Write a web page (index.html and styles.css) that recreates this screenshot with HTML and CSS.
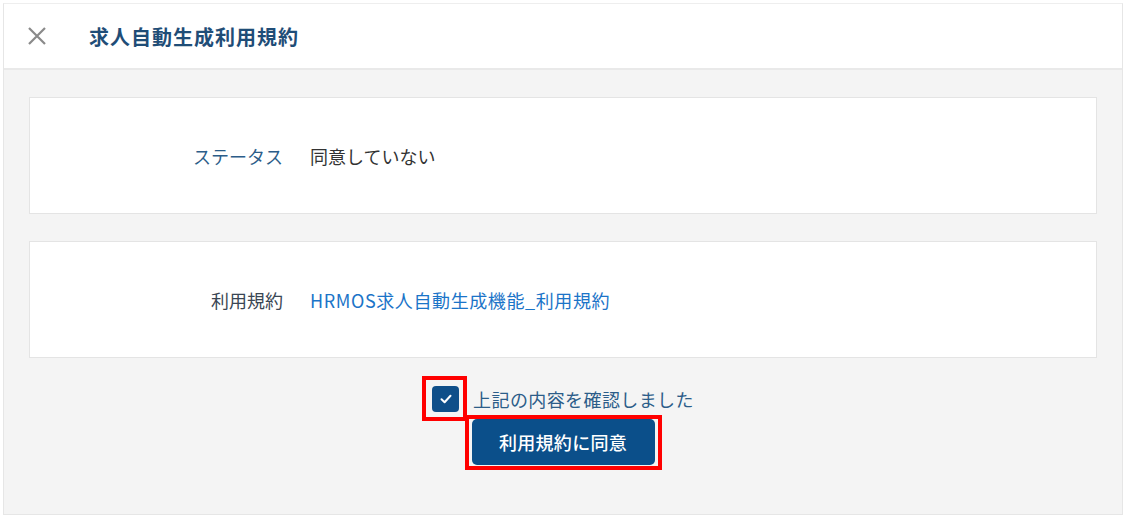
FILE: index.html
```html
<!DOCTYPE html>
<html lang="ja">
<head>
<meta charset="utf-8">
<title>求人自動生成利用規約</title>
<link rel="stylesheet" href="styles.css">
</head>
<body>
<div class="frame">
  <header class="header">
    <button class="close" aria-label="閉じる">
      <svg width="20" height="20" viewBox="0 0 20 20"><path d="M2 2 L18 18 M18 2 L2 18" stroke="#8a8a8a" stroke-width="2.2" stroke-linecap="butt"/></svg>
    </button>
    <h1 class="title">求人自動生成利用規約</h1>
  </header>
  <main class="content">
    <section class="card">
      <div class="label label-blue">ステータス</div>
      <div class="value">同意していない</div>
    </section>
    <section class="card">
      <div class="label label-dark">利用規約</div>
      <a class="value link" href="#">HRMOS求人自動生成機能_利用規約</a>
    </section>
    <div class="agree">
      <label class="check-row">
        <span class="checkbox">
          <svg width="14" height="14" viewBox="0 0 14 14"><path d="M2.5 7.3 L5.6 10.2 L11.5 3.8" fill="none" stroke="#fff" stroke-width="2" stroke-linecap="round" stroke-linejoin="round"/></svg>
          <span class="mark mark-check"></span>
        </span>
        <span class="check-text">上記の内容を確認しました</span>
      </label>
      <button class="submit">利用規約に同意<span class="mark mark-btn"></span></button>
    </div>
  </main>
</div>
</body>
</html>
```

FILE: styles.css
```css
* { box-sizing: border-box; }
html, body { margin: 0; padding: 0; background: #fff; }
body {
  font-family: "Noto Sans CJK JP", "Noto Sans", sans-serif;
  width: 1126px;
  height: 517px;
  overflow: hidden;
}
.frame {
  margin: 3px 0 0 3px;
  width: 1120px;
  height: 512px;
  border: 1px solid #e6e6e6;
  border-top-color: #eeeeee;
  background: #f4f4f4;
  display: flex;
  flex-direction: column;
}
.header {
  height: 66px;
  flex: none;
  background: #fff;
  border-bottom: 2px solid #e9e9e9;
  display: flex;
  align-items: center;
}
.close {
  border: 0;
  background: none;
  padding: 0;
  margin-left: 23px;
  width: 20px;
  height: 20px;
  display: flex;
  cursor: pointer;
}
.title {
  margin: 0 0 0 42px;
  font-size: 20px;
  font-weight: 700;
  color: #1f4d77;
  letter-spacing: 1px;
}
.content {
  flex: 1;
  padding: 27px 25px 0 25px;
  display: flex;
  flex-direction: column;
  gap: 27px;
}
.card {
  height: 117px;
  background: #fff;
  border: 1px solid #e4e4e4;
  display: flex;
  align-items: center;
  font-size: 18px;
}
.label {
  width: 253px;
  text-align: right;
}
.label-blue { color: #2c5d89; }
.label-dark { color: #3a4654; }
.value {
  margin-left: 27px;
  color: #333;
}
.link {
  color: #1b74c8;
  text-decoration: none;
  letter-spacing: 0.6px;
}
.agree {
  display: flex;
  flex-direction: column;
  align-items: center;
  margin-top: 1px;
}
.check-row {
  display: flex;
  align-items: center;
  gap: 14px;
  cursor: pointer;
}
.checkbox {
  position: relative;
  width: 27px;
  height: 26px;
  border-radius: 4px;
  background: #0f4f89;
  display: flex;
  align-items: center;
  justify-content: center;
}
.check-text {
  font-size: 18px;
  color: #2c5d89;
  letter-spacing: 0.4px;
}
.submit {
  position: relative;
  margin-top: 7px;
  width: 183px;
  height: 46px;
  border: 0;
  border-radius: 5px;
  background: #0b4f8a;
  color: #fff;
  font-family: inherit;
  font-size: 18px;
  font-weight: 500;
  letter-spacing: 0.3px;
  cursor: pointer;
}
.mark {
  position: absolute;
  border: 4px solid #ff0000;
  pointer-events: none;
}
.mark-check {
  left: -10px;
  top: -10px;
  width: 45px;
  height: 45px;
}
.mark-btn {
  left: -7px;
  top: -4px;
  width: 197px;
  height: 55px;
}
```
